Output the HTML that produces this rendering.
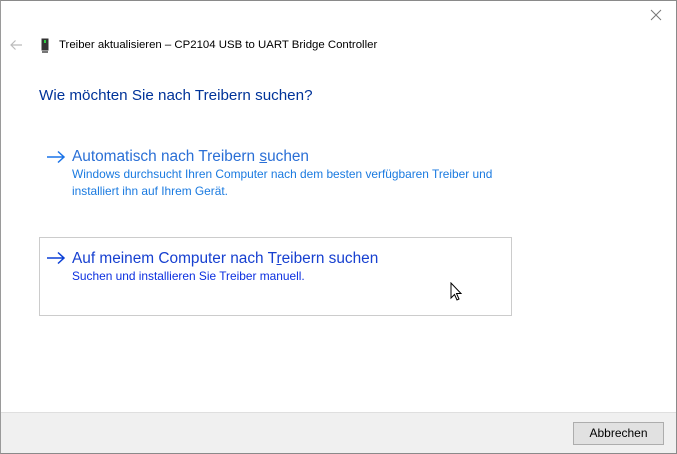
<!DOCTYPE html>
<html><head><meta charset="utf-8"><style>
*{margin:0;padding:0;box-sizing:border-box}
body{width:677px;height:454px;overflow:hidden;background:#fff;font-family:"Liberation Sans",sans-serif;position:relative}
.frame{position:absolute;left:0;top:0;width:677px;height:454px;border:1px solid #8a8a8a;border-left-color:#9a9a9a}
.abs{position:absolute;white-space:nowrap}
.title{left:59px;top:39px;font-size:11.4px;color:#000}
.h{left:39px;top:87px;font-size:15.2px;color:#003399}
.opt{font-size:15.4px}
.sub{font-size:11.9px;line-height:17px}
.footer{position:absolute;left:1px;right:1px;top:412px;bottom:1px;background:#f0f0f0;border-top:1px solid #dfdfdf}
.btn{position:absolute;left:573px;top:422px;width:91px;height:23px;background:#e1e1e1;border:1px solid #adadad;font-size:12px;text-align:center;line-height:21px;color:#000}
.box{position:absolute;left:39px;top:237px;width:473px;height:79px;border:1px solid #cccccc}
</style></head><body>
<div class="frame"></div>
<svg class="abs" style="left:649px;top:8px" width="14" height="14"><path d="M2 2L12 12M12 2L2 12" stroke="#777" stroke-width="1"/></svg>
<svg class="abs" style="left:9px;top:39px" width="14" height="12"><path d="M13 6H2M6.5 1.5L2 6l4.5 4.5" stroke="#bbb" stroke-width="1.2" fill="none"/></svg>
<svg class="abs" style="left:41px;top:38px" width="8" height="15"><rect x="0.5" y="0.5" width="7" height="12" fill="#333"/><rect x="3" y="2" width="2" height="3" fill="#2ecc40"/><rect x="1" y="13" width="6" height="2" fill="#777"/></svg>
<div class="abs title">Treiber aktualisieren – CP2104 USB to UART Bridge Controller</div>
<div class="abs h">Wie möchten Sie nach Treibern suchen?</div>
<svg class="abs" style="left:46px;top:150px" width="20" height="14"><path d="M1 7H18M12 1.5L18 7l-6 5.5" stroke="#1a73e8" stroke-width="1.5" fill="none"/></svg>
<div class="abs opt" style="left:72px;top:148px;color:#2a6fd6">Automatisch nach Treibern <u>s</u>uchen</div>
<div class="abs sub" style="left:72px;top:166px;color:#1a7ae0">Windows durchsucht Ihren Computer nach dem besten verfügbaren Treiber und<br>installiert ihn auf Ihrem Gerät.</div>
<div class="box"></div>
<svg class="abs" style="left:46px;top:251px" width="20" height="14"><path d="M1 7H18M12 1.5L18 7l-6 5.5" stroke="#0a3fd6" stroke-width="1.5" fill="none"/></svg>
<div class="abs opt" style="left:72px;top:250px;color:#1740d0">Auf meinem Computer nach T<u>r</u>eibern suchen</div>
<div class="abs sub" style="left:72px;top:268px;color:#0a2ee0">Suchen und installieren Sie Treiber manuell.</div>
<svg class="abs" style="left:450px;top:282px" width="13" height="20"><path d="M1 1V16L4.5 12.5 7 18 9 17 6.5 11.5H11Z" fill="#fff" stroke="#000" stroke-width="1"/></svg>
<div class="footer"></div>
<div class="btn">Abbrechen</div>
</body></html>
